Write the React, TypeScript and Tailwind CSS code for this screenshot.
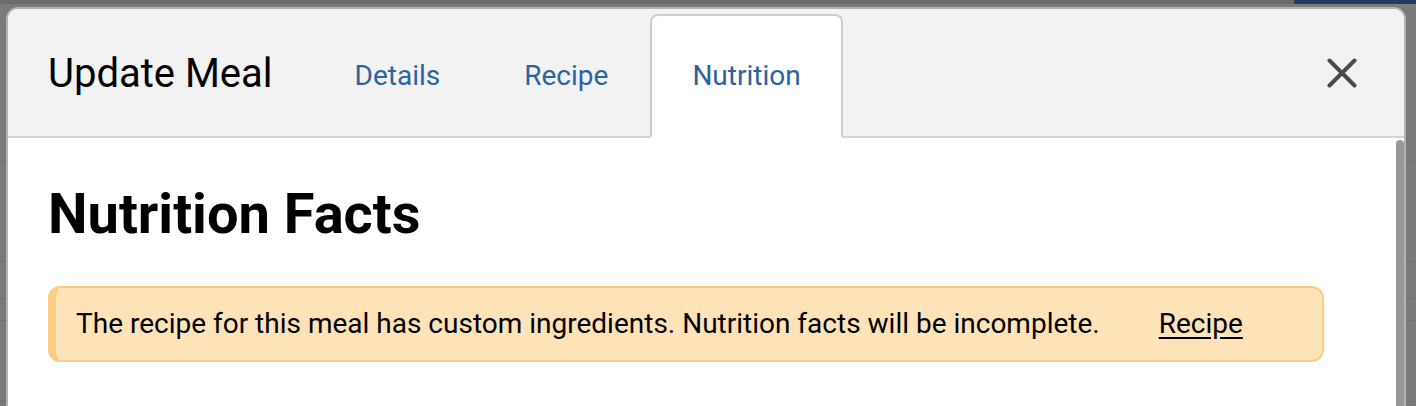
import { useState } from "react";

type Tab = {
  id: string;
  label: string;
};

const tabs: Tab[] = [
  { id: "details", label: "Details" },
  { id: "recipe", label: "Recipe" },
  { id: "nutrition", label: "Nutrition" },
];

// faint rows of the page sitting under the scrim
const pageRows = [158, 100, 37, 22, 81];

const CloseIcon = () => (
  <svg width="30" height="30" viewBox="0 0 30 30" fill="none">
    <path d="M2.5 2.5 L27.5 27.5 M27.5 2.5 L2.5 27.5" stroke="#4a4a4a" strokeWidth="4" strokeLinecap="round" />
  </svg>
);

const App = () => {
  const [activeTab, setActiveTab] = useState("nutrition");

  return (
    <div className="relative w-[1416px] h-[406px] overflow-hidden bg-[#7a7a7a] font-['Roboto','Liberation_Sans',sans-serif]">
      {/* page under the modal */}
      <div className="flex h-[4px]">
        <div className="flex-1 bg-[#6b6b6b]" />
        <div className="w-[122px] bg-[#213b5d]" />
      </div>
      {pageRows.map((h, idx) => (
        <div key={idx} className="border-b border-[#6f6f6f]" style={{ height: h }} />
      ))}

      {/* modal */}
      <div className="absolute left-[6px] top-[7px] w-[1400px] h-[440px] flex flex-col overflow-hidden rounded-t-[12px] border-2 border-[#b3b3b3] bg-white">
        <header className="flex h-[129px] shrink-0 border-b-2 border-[#d3d3d3] bg-[#f2f2f2] pl-[40px]">
          <h2 className="mt-[2px] self-center text-[40px] leading-none text-black">Update Meal</h2>

          <nav className="ml-[40px] mb-[-2px] flex self-end">
            {tabs.map((tab) => (
              <button
                key={tab.id}
                onClick={() => setActiveTab(tab.id)}
                className={
                  tab.id === activeTab
                    ? "flex h-[124px] items-center rounded-t-[8px] border-2 border-[#cdcdcd] border-b-white bg-white px-[40px] text-[28px] leading-none text-[#2b63a1]"
                    : "flex h-[124px] items-center rounded-t-[8px] border-2 border-transparent px-[40px] text-[28px] leading-none text-[#2b63a1]"
                }
              >
                {tab.label}
              </button>
            ))}
          </nav>

          <button className="ml-auto mr-[47px] self-center">
            <CloseIcon />
          </button>
        </header>

        <div className="flex flex-1 bg-white">
          <div className="flex-1 pl-[40px]">
            <h1 className="mt-[48px] text-[56px] font-bold leading-none text-black">Nutrition Facts</h1>

            <div className="mt-[44px] flex h-[76px] w-[1276px] items-center rounded-[12px] border-2 border-l-[8px] border-[#fccb84] bg-[#fee3b9] pl-[20px] text-[28px] text-black">
              <p>The recipe for this meal has custom ingredients. Nutrition facts will be incomplete.</p>
              <a className="ml-[59px] underline underline-offset-[4px]">Recipe</a>
            </div>
          </div>

          <div className="mt-[2px] w-[8px] rounded-t-[5px] bg-[#989898]" />
        </div>
      </div>
    </div>
  );
};

export default App;
